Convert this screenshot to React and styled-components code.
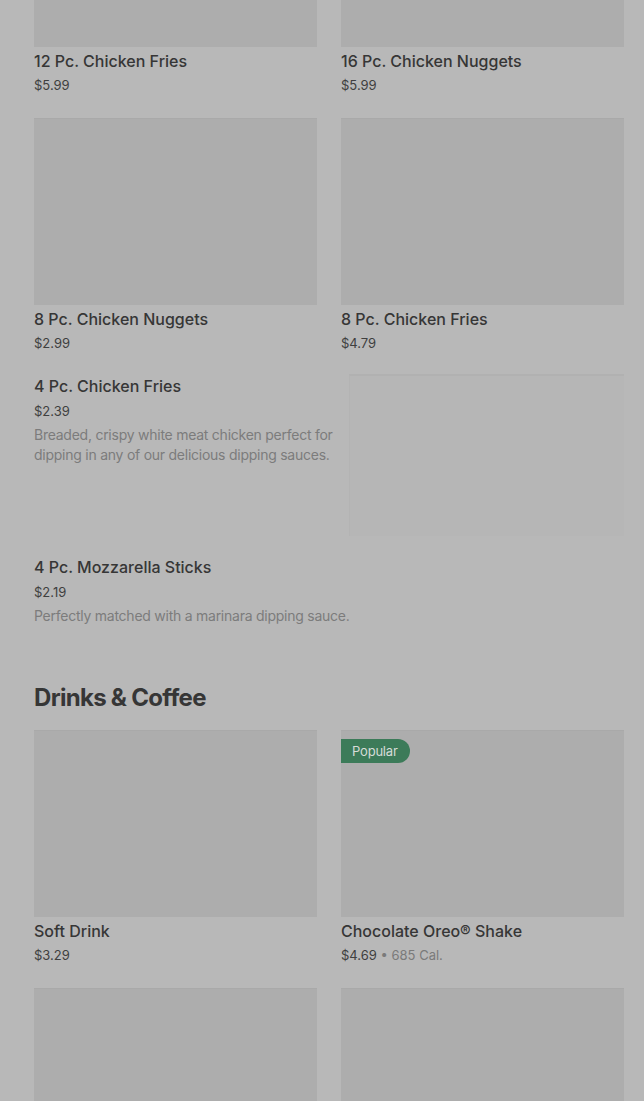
import React from 'react';
import styled, { createGlobalStyle } from 'styled-components';

const GlobalStyle = createGlobalStyle`
  html, body {
    margin: 0;
    padding: 0;
    background: #b8b8b8;
    overflow: hidden;
  }
  body {
    font-family: Inter, "Noto Sans", "Liberation Sans", sans-serif;
    color: #363636;
  }
`;

const Page = styled.div`
  padding: 0 20px 0 34px;
  margin-top: -140px;
  height: 1241px;
  overflow: hidden;
`;

const Grid = styled.div`
  display: grid;
  grid-template-columns: 283px 283px;
  column-gap: 24px;
  row-gap: 24px;
`;

const Card = styled.div`
  display: flex;
  flex-direction: column;
`;

const ImageBox = styled.div`
  position: relative;
  height: 187px;
  background: #adadad;
  border-top: 1px solid #a9a9a9;
  box-sizing: border-box;
`;

const Badge = styled.span`
  position: absolute;
  top: 8px;
  left: 0;
  height: 24px;
  padding: 0 12px 0 11px;
  display: flex;
  align-items: center;
  background: #3c7b59;
  color: #d6dcd8;
  font-size: 13px;
  letter-spacing: -0.2px;
  border-radius: 0 12px 12px 0;
`;

const Title = styled.div`
  margin-top: 4px;
  font-size: 16px;
  line-height: 20px;
  font-weight: 500;
  color: #363636;
`;

const Price = styled.div`
  margin-top: ${p => p.$gap || 5}px;
  font-size: 13px;
  line-height: 18px;
  color: #3f3f3f;
`;

const Cal = styled.span`
  color: #7a7a7a;
`;

const Desc = styled.div`
  margin-top: 5px;
  font-size: 14px;
  line-height: 20px;
  letter-spacing: -0.25px;
  color: #7c7c7c;
`;

const List = styled.div`
  margin-top: 22px;
  display: flex;
  flex-direction: column;
  gap: 19px;
`;

const Row = styled.div`
  display: flex;
  gap: 12px;
  min-height: ${p => (p.$image ? '162px' : 'auto')};
`;

const RowText = styled.div`
  flex: 1;
  margin-top: -2px;
`;

const RowImage = styled.div`
  width: 275px;
  height: 162px;
  flex-shrink: 0;
  background: #b6b6b6;
  border-top: 2px solid #b1b1b1;
  border-left: 1px solid #b3b3b3;
  box-sizing: border-box;
`;

const Heading = styled.h2`
  margin: 56px 0 16px;
  font-size: 24px;
  line-height: 32px;
  font-weight: 700;
  letter-spacing: -0.7px;
  color: #363636;
`;

const topItems = [
  { name: '12 Pc. Chicken Fries', price: '$5.99' },
  { name: '16 Pc. Chicken Nuggets', price: '$5.99' },
  { name: '8 Pc. Chicken Nuggets', price: '$2.99' },
  { name: '8 Pc. Chicken Fries', price: '$4.79' },
];

const drinks = [
  { name: 'Soft Drink', price: '$3.29' },
  { name: 'Chocolate Oreo® Shake', price: '$4.69', cal: '685 Cal.', badge: 'Popular' },
  { name: '', price: '' },
  { name: '', price: '' },
];

const MenuCard = ({ item }) => (
  <Card>
    <ImageBox>{item.badge && <Badge>{item.badge}</Badge>}</ImageBox>
    {item.name && <Title>{item.name}</Title>}
    {item.price && (
      <Price>
        {item.price}
        {item.cal && <Cal> • {item.cal}</Cal>}
      </Price>
    )}
  </Card>
);

const App = () => (
  <>
    <GlobalStyle />
    <Page>
      <Grid>
        {topItems.map(i => <MenuCard key={i.name} item={i} />)}
      </Grid>
      <List>
        <Row $image>
          <RowText>
            <Title>4 Pc. Chicken Fries</Title>
            <Price $gap={6}>$2.39</Price>
            <Desc>Breaded, crispy white meat chicken perfect for dipping in any of our delicious dipping sauces.</Desc>
          </RowText>
          <RowImage />
        </Row>
        <Row>
          <RowText>
            <Title>4 Pc. Mozzarella Sticks</Title>
            <Price $gap={6}>$2.19</Price>
            <Desc>Perfectly matched with a marinara dipping sauce.</Desc>
          </RowText>
        </Row>
      </List>
      <Heading>Drinks &amp; Coffee</Heading>
      <Grid>
        {drinks.map((i, n) => <MenuCard key={n} item={i} />)}
      </Grid>
    </Page>
  </>
);

export default App;
